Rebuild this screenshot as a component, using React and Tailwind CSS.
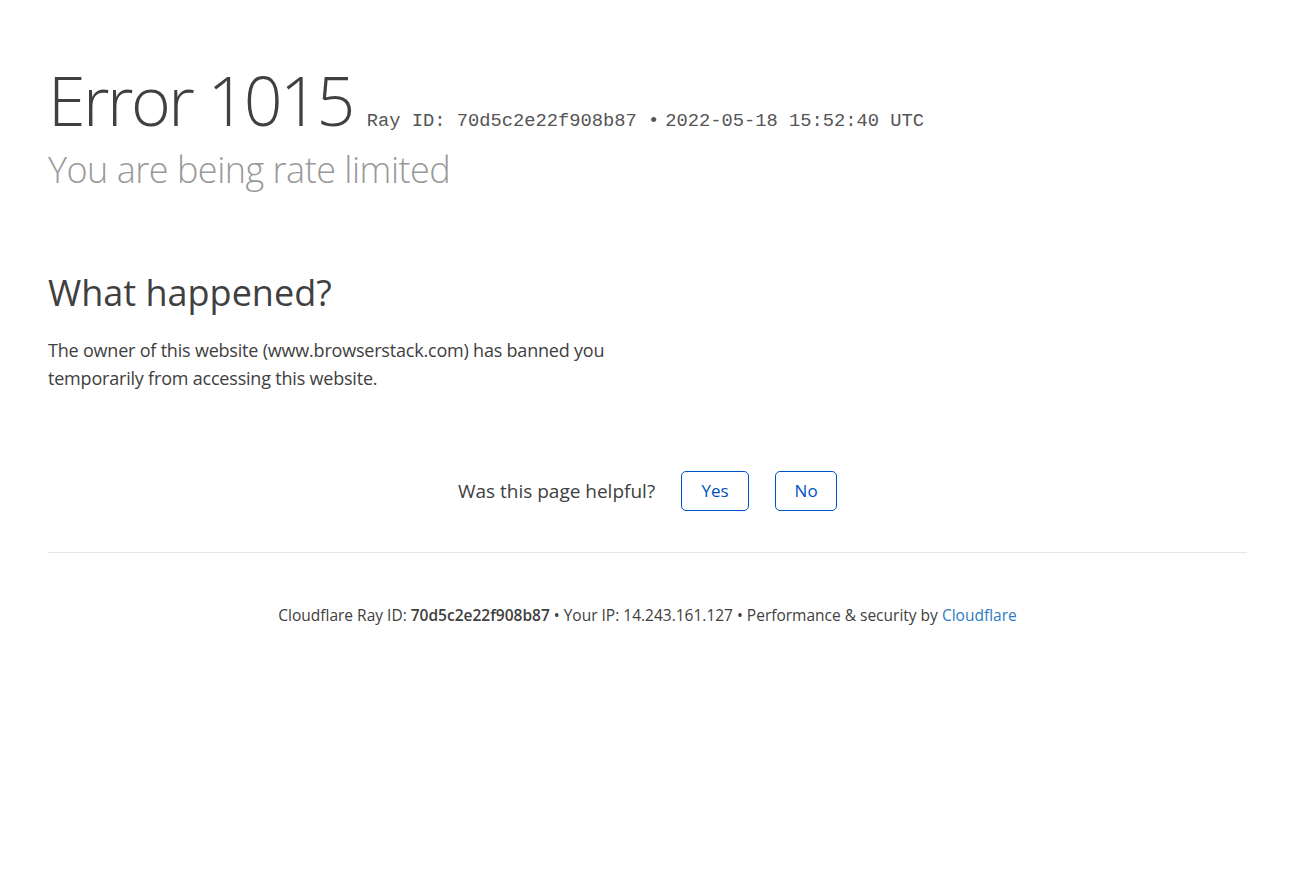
export default function App() {
  return (
    <div className="min-h-screen bg-white px-12 pt-[54px] text-[#404040]" style={{ fontFamily: '"Open Sans", "Noto Sans", sans-serif' }}>
      <header>
        <h1 className="text-[68px] font-light leading-[92.75px] text-[#404040]">
          <span className="mr-[14px] tracking-[-2.5px]">Error 1015</span>
          <span className="text-[18.75px] font-normal leading-[1.25] text-[#555555]" style={{ fontFamily: '"Liberation Mono", monospace' }}>
            Ray ID: 70d5c2e22f908b87 •<span className="ml-[6px]">2022-05-18 15:52:40 UTC</span>
          </span>
        </h1>
        <h2 className="text-[36px] font-light leading-[46.875px] tracking-[-0.5px] text-[#999999]">You are being rate limited</h2>
      </header>

      <section className="mt-[76px] w-[600px]">
        <h2 className="mb-[19px] text-[36px] font-normal leading-[46.875px] text-[#404040]">What happened?</h2>
        <p className="text-[18px] leading-[28.125px] tracking-[-0.2px] text-[#404040]">
          The owner of this website (www.browserstack.com) has banned you temporarily from accessing this website.
        </p>
      </section>

      <div className="mt-[79px] flex items-center justify-center gap-[26px]">
        <span className="text-[19px] text-[#404040]">Was this page helpful?</span>
        <div className="flex gap-[26px]">
          <button className="flex h-10 w-[68px] items-center justify-center rounded-[5px] border border-[#0051c3] text-[17px] text-[#0051c3]">Yes</button>
          <button className="flex h-10 w-[62px] items-center justify-center rounded-[5px] border border-[#0051c3] text-[17px] text-[#0051c3]">No</button>
        </div>
      </div>

      <div className="mt-[41px] border-t border-[#e6e6e6]" />

      <footer className="pt-[51px] text-center text-[15.5px] text-[#404040]">
        Cloudflare Ray ID: <strong className="font-semibold">70d5c2e22f908b87</strong> • Your IP: 14.243.161.127 • Performance &amp; security by{' '}
        <a className="text-[#2f7bbf]">Cloudflare</a>
      </footer>
    </div>
  );
}
